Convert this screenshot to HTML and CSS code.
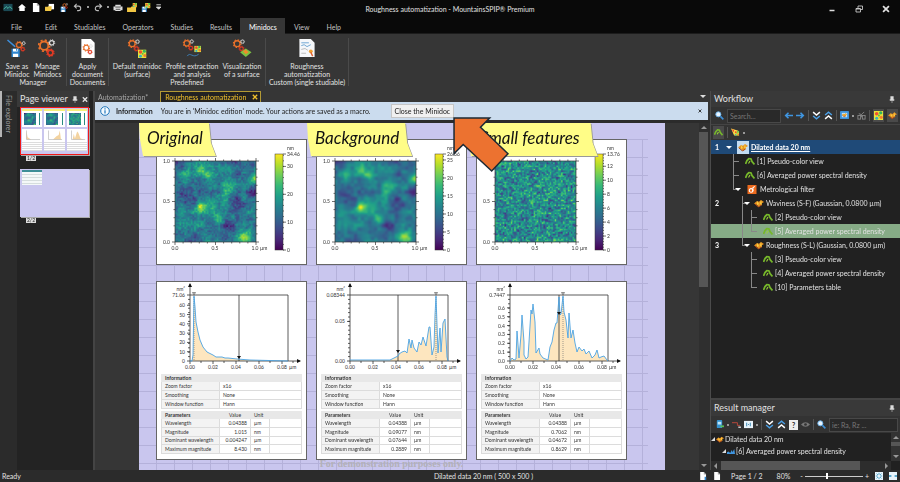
FILE: index.html
```
<!DOCTYPE html>
<html lang="en">
<head>
  <meta charset="UTF-8">
  <meta name="viewport" content="width=device-width, initial-scale=1.0">
  <title>Roughness automatization - MountainsSPIP® Premium</title>
  <link rel="stylesheet" href="styles.css">
</head>
<body>
  <!-- icon sprite -->
  <svg class="sprite" aria-hidden="true">
    <symbol id="i-gears" viewBox="0 0 20 20">
      <circle cx="7" cy="7" r="4.4" fill="none" stroke="#e8702a" stroke-width="2"/>
      <circle cx="7" cy="7" r="5.8" fill="none" stroke="#e8702a" stroke-width="1.8" stroke-dasharray="2.2 2.35"/>
      <circle cx="15" cy="4" r="2.3" fill="none" stroke="#ddd" stroke-width="1.2"/>
      <circle cx="15" cy="4" r="3.2" fill="none" stroke="#ddd" stroke-width="1" stroke-dasharray="1.2 1.3"/>
      <circle cx="13.500" cy="14.500" r="2.700" fill="none" stroke="#e03a24" stroke-width="1.800"/>
      <circle cx="13.500" cy="14.500" r="3.900" fill="none" stroke="#e03a24" stroke-width="1.200" stroke-dasharray="1.600 1.460"/>
    </symbol>
    <symbol id="i-disk" viewBox="0 0 10 10">
      <path d="M0 0h8.500l1.500 1.500V10H0z" fill="#2f86d0"/>
      <path d="M2 0h5.500v3.500H2zM2 6h6v4H2z" fill="#fff"/>
      <path d="M5.500 .7h1.200v2H5.500z" fill="#2f86d0"/>
    </symbol>
    <symbol id="i-map" viewBox="0 0 10 10">
      <rect width="10" height="10" fill="#e8e23a"/>
      <circle cx="3" cy="3" r="2" fill="#f05030"/><circle cx="8" cy="7" r="1.800" fill="#f08030"/>
      <circle cx="7.500" cy="2" r="1.800" fill="#35b55c"/><circle cx="3" cy="8" r="1.700" fill="#38b0c0"/>
      <circle cx="5.500" cy="5" r="1.100" fill="#58c040"/>
    </symbol>
    <symbol id="i-surface" viewBox="0 0 10 8">
      <path d="M0 4l3-2.500 2 .8L7 .5l3 2L7.500 4 8 5.500 4.500 7.500 3 5.500z" fill="#e69422"/>
      <path d="M3 1.500l2 3L3 5.500zM7 .5L6 4l2 1.500z" fill="#f9cf45"/>
      <path d="M1 4.500l3.500 3 3-2" fill="none" stroke="#a8431c" stroke-width="1"/>
    </symbol>
    <symbol id="i-study" viewBox="0 0 10 8">
      <path d="M.5 6.500L2 3l2-2 2 .5 1 2.500 2.500 3" fill="none" stroke="#76b82a" stroke-width="1.800"/>
      <path d="M3.500 6l1.500-2.500" fill="none" stroke="#9bd03a" stroke-width="1.200"/>
    </symbol>
    <symbol id="i-page" viewBox="0 0 8 10"><path d="M.5 0H5l3 3v7H.5z" fill="#fff"/><path d="M5 0v3h3z" fill="#aaa"/></symbol>
    <symbol id="i-pin" viewBox="0 0 6 8"><path d="M1.500 .5h3v3.500h1v1H.5V4h1zM3 5v3" fill="#ddd" stroke="#ddd" stroke-width=".6"/></symbol>
    <symbol id="i-search" viewBox="0 0 10 10"><circle cx="3.700" cy="3.700" r="2.800" fill="#e8f4ff" stroke="#6bb5f0"/><path d="M6 6l3.300 3.300" stroke="#3c8fd8" stroke-width="1.800"/></symbol>
    <symbol id="i-x" viewBox="0 0 6 6"><path d="M.8 .8l4.400 4.400M5.200 .8L.8 5.200" stroke="currentColor" stroke-width="1.300"/></symbol>
    <symbol id="i-chev" viewBox="0 0 8 8"><path d="M1 1l3 2.500L7 1" fill="none" stroke="#fff" stroke-width="1.300"/><path d="M1 4.500L4 7l3-2.500" fill="none" stroke="#4aa0e8" stroke-width="1.300"/></symbol>
    <symbol id="i-arrow" viewBox="0 0 8 8"><path d="M8 4H1.500M4 1.500L1.500 4 4 6.500" fill="none" stroke="#3f95e0" stroke-width="1.400"/></symbol>
    <symbol id="i-folder" viewBox="0 0 11 10"><path d="M0 4h4l1-1h5v6H0z" fill="#f1c644"/></symbol>
  </svg>

  <header class="titlebar">
    <div class="quick">
      <button aria-label="Application"><svg viewBox="0 0 10 10"><rect y="1" width="10" height="8" fill="#1b4a55"/><path d="M0 7l3-3 2 2 2-2 3 3" fill="none" stroke="#4fc3a8"/></svg></button>
      <button aria-label="Home"><svg viewBox="0 0 10 10"><path d="M5 1l4.500 4H8v4H2V5H.5z" fill="#fff"/></svg></button>
      <button aria-label="New"><svg viewBox="0 0 8 10"><use href="#i-page"/></svg></button>
      <button aria-label="Open"><svg viewBox="0 0 11 10"><path d="M4 1h6v6H4z" fill="#fff"/><use href="#i-folder" width="8"/><path d="M0 5h6l1 4H0z" fill="#f1c644"/></svg></button>
      <button aria-label="Save minidoc"><svg viewBox="0 0 10 10"><use href="#i-disk" x="1" y="4" width="6" height="6"/><use href="#i-gears" x="3" width="7" height="7"/></svg></button>
      <button aria-label="Undo"><svg viewBox="0 0 10 10"><path d="M3.500 1L1 3.500 3.500 6M1 3.500h4.500a2.500 2.500 0 010 5H4" fill="none" stroke="#bbb" stroke-width="1.200"/></svg></button>
      <span class="dot"></span>
      <button aria-label="Redo"><svg viewBox="0 0 10 10"><path d="M6.500 1L9 3.500 6.500 6M9 3.500H4.500a2.500 2.500 0 000 5H6" fill="none" stroke="#bbb" stroke-width="1.200"/></svg></button>
      <span class="dot"></span>
      <button aria-label="Print"><svg viewBox="0 0 10 10"><path d="M2 2h6v2h2v4H8v1H2V8H0V4h2z" fill="#ddd"/><path d="M2 4.500h6M2.500 7h5" stroke="#444"/></svg></button>
      <button aria-label="Load surface"><svg viewBox="0 0 11 10"><use href="#i-folder" y="1"/><use href="#i-map" x="6" y="0" width="5" height="5"/></svg></button>
      <button aria-label="Save surface"><svg viewBox="0 0 10 10"><use href="#i-disk" y="4" width="6" height="6"/><use href="#i-map" x="4" width="6" height="6"/></svg></button>
      <button aria-label="Customize"><svg viewBox="0 0 10 10"><path d="M1 2h5M1 4.500h5L3.500 7z" fill="#ddd" stroke="#ddd"/></svg></button>
    </div>
    <div class="app-title">Roughness automatization - MountainsSPIP® Premium</div>
    <div class="win-buttons">
      <button aria-label="Minimize"><svg viewBox="0 0 8 8"><path d="M1.500 5.500h5" stroke="#ddd" stroke-width="1.500"/></svg></button>
      <button aria-label="Restore"><svg viewBox="0 0 8 8"><path d="M3 3V1h4.500v3.500h-2M1 3.500h4.500V7H1zM1 4h4" fill="none" stroke="#ddd" stroke-width=".8"/></svg></button>
      <button aria-label="Close window"><svg viewBox="0 0 6 6"><use href="#i-x"/></svg></button>
    </div>
  </header>

  <nav class="menu">
    <button class="file">File</button>
    <button>Edit</button>
    <button>Studiables</button>
    <button>Operators</button>
    <button>Studies</button>
    <button>Results</button>
    <button class="active">Minidocs</button>
    <button>View</button>
    <button>Help</button>
  </nav>

  <section class="ribbon">
    <div class="group manager">
      <div class="tools">
        <button><svg viewBox="0 0 20 20"><use href="#i-gears" x="8" width="12" height="16"/><path d="M0 1l8 7" stroke="#3d8fdd" stroke-width="1.500"/><use href="#i-disk" x="4" y="10" width="9" height="9"/></svg>Save as<br>Minidoc</button>
        <button><svg viewBox="0 0 20 20"><use href="#i-gears"/></svg>Manage<br>Minidocs</button>
      </div>
      <div class="caption">Manager</div>
    </div>
    <div class="group documents">
      <div class="tools">
        <button><svg viewBox="0 0 20 20"><path d="M3 0h10l4 4v16H3z" fill="#fff"/><use href="#i-gears" x="4" y="5" width="12" height="12"/></svg>Apply<br>document</button>
      </div>
      <div class="caption">Documents</div>
    </div>
    <div class="group predefined">
      <div class="tools">
        <button><svg viewBox="0 0 20 20"><use href="#i-gears" width="14" height="14"/><use href="#i-map" x="11" y="11" width="9" height="9"/></svg>Default minidoc<br>(surface)</button>
        <button><svg viewBox="0 0 20 20"><use href="#i-gears" width="13" height="13"/><use href="#i-map" x="12" y="7" width="8" height="7"/><path d="M5 18c3-5 6 3 12-2" fill="none" stroke="#3d7fb8"/></svg>Profile extraction<br>and analysis</button>
        <button><svg viewBox="0 0 20 20"><use href="#i-gears" width="14" height="14"/><path d="M8 14l6-4 6 4-6 5z" fill="#7cc142"/><path d="M11 13l3-2 3 3-3 2z" fill="#f08a2a"/></svg>Visualization<br>of a surface</button>
      </div>
      <div class="caption">Predefined</div>
    </div>
    <div class="group custom">
      <div class="tools">
        <button><svg viewBox="0 0 20 20"><path d="M2 0h12l4 4v15H2z" fill="#f5f7fa"/><path d="M4 4h8M4 7l3-1 3 2 4-2" fill="none" stroke="#4a90c8" stroke-width=".8"/><path d="M4 11l4-1 3 2M4 15h5" fill="none" stroke="#aaa" stroke-width=".8"/><circle cx="14" cy="13" r="2" fill="#f0a030"/><path d="M14 14l2 4" stroke="#e06030" stroke-width="1.500"/></svg>Roughness<br>automatization</button>
      </div>
      <div class="caption">Custom (single studiable)</div>
    </div>
  </section>

  <main>
    <aside class="explorer"><button>File explorer</button></aside>

    <aside class="viewer">
      <div class="pane-head"><h2>Page viewer</h2><svg class="pin" viewBox="0 0 6 8"><use href="#i-pin"/></svg><button aria-label="Close page viewer"><svg viewBox="0 0 6 6"><use href="#i-x"/></svg></button></div>
      <figure>
        <div class="thumb current">
          <div class="mini"><canvas width="11" height="11" data-map="0"></canvas><i></i></div>
          <div class="mini"><canvas width="11" height="11" data-map="1"></canvas><i></i></div>
          <div class="mini"><canvas width="11" height="11" data-map="2"></canvas><i></i></div>
          <div class="mini report"><svg viewBox="0 0 18 10"><path d="M4 9V2l1 5 3 2z" fill="#f3d3a0"/><path d="M4 1v8h12" fill="none" stroke="#aaa" stroke-width=".5"/></svg></div>
          <div class="mini report"><svg viewBox="0 0 18 10"><path d="M8 9l3-3 2-1 1-4 1 8z" fill="#f3d3a0"/><path d="M4 1v8h12" fill="none" stroke="#aaa" stroke-width=".5"/></svg></div>
          <div class="mini report"><svg viewBox="0 0 18 10"><path d="M5 9l1-5 1 4 2-6 1 1 2 5 3 1z" fill="#f3d3a0"/><path d="M4 1v8h12" fill="none" stroke="#aaa" stroke-width=".5"/></svg></div>
        </div>
        <figcaption>1/2</figcaption>
      </figure>
      <figure>
        <div class="thumb second"><div class="mini-table"></div></div>
        <figcaption>2/2</figcaption>
      </figure>
    </aside>

    <section class="workspace">
      <div class="tabs">
        <button>Automatization*</button>
        <button class="active">Roughness automatization <svg viewBox="0 0 6 6"><use href="#i-x"/></svg></button>
        <span class="drop"></span>
      </div>
      <div class="infobar">
        <svg class="info" viewBox="0 0 10 10"><circle cx="5" cy="5" r="4.300" fill="#f4faff" stroke="#2277bb" stroke-width="1"/><path d="M5 4.300V7.500M5 2.300v1.100" stroke="#2277bb" stroke-width="1.200"/></svg>
        <strong>Information</strong>
        <span>You are in 'Minidoc edition' mode. Your actions are saved as a macro.</span>
        <button class="close-doc">Close the Minidoc</button>
        <button class="dismiss" aria-label="Dismiss"><svg viewBox="0 0 6 6"><use href="#i-x"/></svg></button>
      </div>
      <div class="canvas-area">
        <div class="sheet">
          <div class="cards">
            <article class="card map"><div class="note"><span>Original</span></div></article>
            <article class="card map"><div class="note"><span>Background</span></div></article>
            <article class="card map"><div class="note wide"><span>Small features</span></div></article>
            <article class="card spectrum"></article>
            <article class="card spectrum"></article>
            <article class="card spectrum"></article>
          </div>
          <footer>For demonstration purposes only.</footer>
        </div>
        <div class="vscroll"><i class="up"></i><b></b><i class="down"></i></div>
        <svg class="pointer" viewBox="0 0 57 56"><path d="M2 2h35l-9 9 27 26-16 17L11 28l-9 9z" fill="#ec7230" stroke="#1d2a35" stroke-width="1.500"/></svg>
      </div>
    </section>

    <aside class="side">
      <section class="workflow">
        <div class="pane-head"><h2>Workflow</h2><svg class="pin" viewBox="0 0 6 8"><use href="#i-pin"/></svg></div>
        <div class="toolbar">
          <svg viewBox="0 0 10 10"><use href="#i-search"/></svg>
          <input type="text" placeholder="Search..." aria-label="Search workflow">
          <button aria-label="Previous"><svg viewBox="0 0 8 8"><use href="#i-arrow"/></svg></button>
          <button aria-label="Next"><svg class="flip" viewBox="0 0 8 8"><use href="#i-arrow"/></svg></button>
          <span class="sep"></span>
          <button aria-label="Expand all"><svg viewBox="0 0 8 8"><use href="#i-chev"/></svg></button>
          <button aria-label="Collapse all"><svg class="turn" viewBox="0 0 8 8"><use href="#i-chev"/></svg></button>
          <span class="sep"></span>
          <button aria-label="Display"><svg viewBox="0 0 10 10"><rect width="10" height="9" rx="1" fill="#3d92d8"/><rect x="2" y="2" width="6" height="5" fill="#bfe2fa"/><use href="#i-surface" x="2" y="2" width="6" height="5"/></svg></button>
          <span class="dot"></span>
          <button aria-label="Link"><svg viewBox="0 0 10 10"><g fill="none" stroke="#888"><rect x="1" y="5" width="3" height="4"/><rect x="6" y="5" width="3" height="4"/><path d="M2 3l3 1 3-3M5 4v3"/></g></svg></button>
          <span class="sep"></span>
          <button aria-label="Images" class="on"><svg viewBox="0 0 10 10"><use href="#i-map"/></svg></button>
          <button aria-label="Surfaces" class="on"><svg viewBox="0 0 10 8"><use href="#i-surface"/></svg></button>
        </div>
        <div class="toolbar second-row">
          <button aria-label="Studies" class="on"><svg viewBox="0 0 10 8"><use href="#i-study"/></svg></button>
          <span class="sep"></span>
          <button aria-label="Filter"><svg viewBox="0 0 11 10"><path d="M0 0l9 3-3 2-2 4z" fill="#ffe14a"/><path d="M1 1l3 1-1 3z" fill="#f05030"/><use href="#i-map" x="4" y="3" width="6" height="6"/></svg></button>
          <span class="dot"></span>
        </div>
        <div class="tree">
          <div class="row selected"><span class="num">1</span><i class="caret"></i><span class="tile"><svg viewBox="0 0 10 8"><use href="#i-surface"/></svg></span><a href="#">Dilated data 20 nm</a></div>
          <div class="row"><i class="g tee"></i><svg viewBox="0 0 10 8"><use href="#i-study"/></svg>[1] Pseudo-color view</div>
          <div class="row"><i class="g tee"></i><svg viewBox="0 0 10 8"><use href="#i-study"/></svg>[6] Averaged power spectral density</div>
          <div class="row metro"><i class="g end open"></i><svg viewBox="0 0 10 10"><rect width="10" height="10" fill="#ec6a1e"/><circle cx="4" cy="6" r="2" fill="none" stroke="#fff" stroke-width="1.200"/><path d="M6 7V3l2-1.500" fill="none" stroke="#fff" stroke-width="1.200"/></svg>Metrological filter</div>
          <div class="row"><span class="num">2</span><i class="g"></i><i class="g tee open"></i><svg viewBox="0 0 10 8"><use href="#i-surface"/></svg>Waviness (S-F) (Gaussian, 0.0800 µm)</div>
          <div class="row"><i class="g"></i><i class="g line"></i><i class="g tee"></i><svg viewBox="0 0 10 8"><use href="#i-study"/></svg>[2] Pseudo-color view</div>
          <div class="row hot"><i class="g"></i><i class="g line"></i><i class="g end"></i><svg viewBox="0 0 10 8"><use href="#i-study"/></svg>[5] Averaged power spectral density</div>
          <div class="row"><span class="num">3</span><i class="g"></i><i class="g end open"></i><svg viewBox="0 0 10 8"><use href="#i-surface"/></svg>Roughness (S-L) (Gaussian, 0.0800 µm)</div>
          <div class="row"><i class="g"></i><i class="g"></i><i class="g tee"></i><svg viewBox="0 0 10 8"><use href="#i-study"/></svg>[3] Pseudo-color view</div>
          <div class="row"><i class="g"></i><i class="g"></i><i class="g tee"></i><svg viewBox="0 0 10 8"><use href="#i-study"/></svg>[4] Averaged power spectral density</div>
          <div class="row"><i class="g"></i><i class="g"></i><i class="g end"></i><svg viewBox="0 0 10 8"><use href="#i-study"/></svg>[10] Parameters table</div>
        </div>
      </section>

      <section class="results">
        <div class="pane-head"><h2>Result manager</h2><svg class="pin" viewBox="0 0 6 8"><use href="#i-pin"/></svg></div>
        <div class="toolbar">
          <button aria-label="Export"><svg viewBox="0 0 10 10"><rect x="2" width="6" height="9" rx="1" fill="#3592cf"/><path d="M3 2h4v3H3z" fill="#bfe6fa"/><path d="M6 7h4" stroke="#5bc05b" stroke-width="2"/></svg></button>
          <span class="dot"></span>
          <button aria-label="Tolerance"><svg viewBox="0 0 10 10"><path d="M0 3h6v3h3" fill="none" stroke="#c34a3c"/><path d="M7 8h3" stroke="#ddd" stroke-width="1.500"/></svg></button>
          <button aria-label="Columns"><svg viewBox="0 0 10 10"><rect y="1" width="10" height="8" fill="#e8f4fb"/><path d="M3 3v4M7 3v4M4.500 5h1" stroke="#2b7fae"/></svg></button>
          <span class="dot"></span>
          <span class="sep"></span>
          <button aria-label="Expand results"><svg viewBox="0 0 8 8"><use href="#i-chev"/></svg></button>
          <button aria-label="Collapse results"><svg class="turn" viewBox="0 0 8 8"><use href="#i-chev"/></svg></button>
          <button class="help" aria-label="Help">?</button>
          <button aria-label="Show"><svg viewBox="0 0 10 10"><path d="M0 5q5-5 10 0-5 5-10 0z" fill="#777"/><circle cx="5" cy="5" r="1.500" fill="#333"/></svg></button>
          <span class="sep"></span>
          <svg viewBox="0 0 10 10"><use href="#i-search"/></svg>
          <input type="text" placeholder="ie: Ra, Rz ..." aria-label="Search results">
        </div>
        <div class="result-list">
          <div class="lines">
            <div class="line1"><i class="corner"></i><svg viewBox="0 0 10 8"><use href="#i-surface"/></svg>Dilated data 20 nm</div>
            <div class="line2"><i class="corner"></i><svg viewBox="0 0 10 8"><path d="M0 7V5l2-1 2 2 2-4 1 3 2-4 1 6z" fill="#3f95e0"/></svg>[6] Averaged power spectral density</div>
          </div>
          <div class="rscroll"><i class="up"></i><b></b><i class="down"></i></div>
        </div>
        <div class="hscroll"><i class="left"></i><b></b><i class="right"></i></div>
      </section>
    </aside>
  </main>

  <footer class="status">
    <span class="ready">Ready</span>
    <span class="current-data">Dilated data 20 nm ( 500 x 500 )</span>
    <div class="zoom">
      <svg viewBox="0 0 8 10"><use href="#i-page"/><path d="M7 6v4" stroke="#2f86d0" stroke-width="2"/></svg>
      <svg viewBox="0 0 8 10"><use href="#i-page"/></svg>
      <span class="pages">Page 1 / 2</span>
      <label for="zoom">80%</label>
      <button aria-label="Zoom out">-</button>
      <input type="range" id="zoom" min="0" max="100" value="38">
      <button aria-label="Zoom in">+</button>
      <svg viewBox="0 0 10 10"><rect width="10" height="10" fill="#e8f4fb"/><path d="M5 1v8M1 5h8M2 2l6 6M8 2L2 8" stroke="#2b90c0"/><rect x="3.500" y="3.500" width="3" height="3" fill="#e8f4fb"/></svg>
      <svg viewBox="0 0 10 10"><rect width="10" height="10" fill="#e8f4fb"/><path d="M0 5h3M7 5h3" stroke="#2b90c0" stroke-width="2"/></svg>
    </div>
  </footer>

  <script src="script.js"></script>
</body>
</html>
```
FILE: styles.css
```
* {
  box-sizing: border-box;
}

body {
  margin: 0;
  height: 100vh;
  display: flex;
  flex-direction: column;
  overflow: hidden;
  background: #363636;
  color: #e2e2e2;
  font: 7px/8px Lato, "Open Sans", sans-serif;
}

button {
  font: inherit;
  color: inherit;
  background: none;
  border: 0;
  padding: 0;
  cursor: pointer;
}

svg {
  display: block;
}

.sprite {
  position: absolute;
  width: 0;
  height: 0;
}

h2 {
  margin: 0;
  flex: 1;
  font-size: 9px;
  line-height: 12px;
  font-weight: 400;
  white-space: nowrap;
}

/* title bar */
.titlebar {
  display: grid;
  grid-template-columns: 1fr auto 1fr;
  align-items: center;
  height: 18px;
  background: #090909;
}

.quick {
  display: flex;
  align-items: center;
  gap: 4px;
  padding-left: 3px;
  margin-top: -4px;
}

.quick svg {
  width: 10px;
  height: 9px;
}

.dot {
  width: 2px;
  height: 2px;
  background: #999;
}

.win-buttons {
  display: flex;
  justify-content: flex-end;
  gap: 19px;
  padding-right: 10px;
}

.win-buttons svg {
  width: 8px;
  height: 8px;
}

.menu {
  display: flex;
  height: 16px;
  padding-left: 2px;
  background: #090909;
  border-bottom: 1px solid #1c1c1c;
}

.menu button {
  padding: 2px 8px 0 9px;
  color: #c4c4c4;
}

.menu .file {
  margin-right: 6px;
}

.menu .active {
  background: #363636;
  color: #fff;
  height: 16px;
}

/* ribbon */
.ribbon {
  display: flex;
  height: 57px;
  padding-top: 4px;
}

.group {
  display: flex;
  flex-direction: column;
  align-items: center;
  height: 48px;
  border-right: 1px solid #4a4a4a;
}

.tools {
  display: flex;
  flex: 1;
}

.tools button {
  display: block;
  padding: 0 2px;
  text-align: center;
  line-height: 8px;
  white-space: nowrap;
}

.tools svg {
  width: 20px;
  height: 19px;
  margin: 0 auto 4px;
}

.manager { padding: 0 2px; width: 67px; }
.documents { width: 42px; }
.predefined { width: 157px; }
.custom { width: 83px; }

/* panes */
main {
  flex: 1;
  min-height: 0;
  display: flex;
}

.explorer {
  width: 17px;
  background: #2b2b2b;
}

.explorer button {
  writing-mode: vertical-rl;
  padding: 4px 3px;
  border-left: 2px solid #b5b5b5;
  color: #999;
}

.viewer {
  width: 76px;
  background: #232323;
  padding-right: 4px;
}

.pane-head {
  display: flex;
  align-items: center;
  gap: 4px;
  height: 16px;
  padding: 0 5px 0 3px;
  background: #393939;
}

.pane-head svg {
  flex: none;
  width: 6px;
  height: 7px;
}

.viewer .pane-head {
  padding-right: 2px;
}

figure {
  margin: 0 0 8px 3px;
}

.thumb {
  height: 48px;
  background: #c9c6ee;
  box-shadow: 1px 1px 0 #aaa;
}

.current {
  display: grid;
  grid-template-columns: 1fr 1fr 1fr;
  grid-template-rows: 18px 22px;
  align-content: start;
  gap: 2px;
  padding: 1px;
  border: 1px solid #f01818;
}

.mini {
  display: flex;
  justify-content: space-between;
  background: #fff;
  border-top: 2px solid #f5ee7a;
  padding: 2px;
}

.mini i {
  width: 1px;
  height: 12px;
  background: #2a8a80;
}

.mini.report {
  display: block;
  border: 0;
  padding: 0;
  background: repeating-linear-gradient(#fff 0 1px, #ddd 1px 2px);
}

.report svg {
  width: 100%;
  height: 12px;
  background: #fff;
}

.second {
  padding: 1px 2px;
}

.mini-table {
  width: 20px;
  height: 15px;
  background: repeating-linear-gradient(#f4f8f8 0 2px, #d5dddd 2px 3px);
  border-top: 2px solid #3e8e96;
}

figcaption {
  width: 10px;
  margin: 1px 0 0 6px;
  background: #ddd;
  color: #222;
  font-size: 5px;
  line-height: 5px;
  text-align: center;
}

/* workspace */
.workspace {
  flex: 1;
  min-width: 0;
  display: flex;
  flex-direction: column;
  border-left: 2px solid #444;
}

.tabs {
  display: flex;
  height: 11px;
  padding-left: 3px;
  color: #a5a5a5;
}

.tabs .active {
  display: flex;
  align-items: center;
  gap: 6px;
  margin-left: 12px;
  padding: 0 2px 0 4px;
  background: #222;
  border: 1px solid #b39a35;
  border-bottom: 0;
  color: #f0c02c;
}

.tabs svg {
  width: 6px;
  height: 6px;
}

.drop {
  margin: 4px 4px 0 auto;
  border: 3px solid transparent;
  border-top-color: #ddd;
  height: 0;
}

.infobar {
  display: flex;
  align-items: center;
  height: 18px;
  margin-right: 2px;
  padding: 0 6px 0 5px;
  background: #cbdcee;
  color: #222;
}

.info {
  width: 10px;
  height: 10px;
  margin-right: 6px;
}

.infobar strong {
  margin-right: 8px;
}

.close-doc {
  margin-left: 20px;
  padding: 2px 3px;
  background: #f0f0f0;
  border: 1px solid #c6c6c6;
}

.dismiss {
  margin-left: auto;
}

.dismiss svg {
  width: 4px;
  height: 4px;
}

.canvas-area {
  position: relative;
  flex: 1;
  min-height: 0;
  display: flex;
  border-top: 3px solid #2b2b2b;
}

.sheet {
  flex: 1;
  margin: 0 34px 0 44px;
  padding: 16px 38px 0 17px;
  background:
    linear-gradient(#c9c6ee 0 16px, transparent 0),
    linear-gradient(90deg, transparent calc(100% - 17px), #c9c6ee 0),
    repeating-linear-gradient(90deg, transparent 0 17px, #b4b1da 17px 18px),
    repeating-linear-gradient(transparent 0 16px, #b4b1da 16px 17px, transparent 17px 18px),
    #c9c6ee;
}

.cards {
  display: grid;
  grid-template-columns: 1fr 1fr 1fr;
  gap: 16px 9px;
}

.card {
  position: relative;
  background: #fff;
  color: #333;
  outline: 1px solid #666;
  outline-offset: -1px;
}

.spectrum {
  padding-bottom: 4px;
}

.sheet footer {
  text-align: center;
  font: bold 10px/8px "Liberation Serif", serif;
  color: #b3b1b8;
}

.card text {
  font-size: 5px;
  fill: #333;
}

.note {
  position: absolute;
  top: -16px;
  left: -9px;
  filter: drop-shadow(1px 1px 0 #999);
}

.card:first-child .note {
  left: -17px;
}

.note span {
  display: block;
  padding: 0 13px 0 8px;
  font: italic 17px/30px Lato, sans-serif;
  height: 33px;
  color: #111;
  white-space: nowrap;
  background: #fffd87;
  clip-path: polygon(0 0, calc(100% - 7px) 0, calc(100% - 5px) 60%, 100% 100%, 4px 100%, 1px 50%);
}

.wide span {
  padding: 0 18px 0 13px;
}

table {
  width: calc(100% - 10px);
  margin: 0 5px 2px;
  border-collapse: collapse;
  table-layout: fixed;
  font-size: 5px;
  line-height: 6px;
  border: 1px solid #ccc;
}

.settings { height: 35px; }
.params { height: 43px; }

table th,
table td {
  padding: 0 3px;
  border: 1px solid #dcdcdc;
  text-align: left;
  font-weight: 400;
}

table thead th {
  background: #e8e8e8;
  border-color: #e8e8e8;
}

table thead th:first-child {
  font-weight: 700;
}

tbody th {
  background: #f3f3f3;
}

.params td:nth-child(2) {
  text-align: right;
}

.params thead th:nth-child(2) {
  text-align: center;
}

.c-name { width: 58px; }
.c-value { width: 31px; }
.c-unit { width: 19px; }

/* scroll bars */
.vscroll {
  display: flex;
  flex-direction: column;
  align-items: center;
  width: 11px;
  padding-right: 2px;
  background: #2f2f2f;
}

.vscroll b {
  width: 9px;
  height: 155px;
  background: #565656;
}

.up,
.down,
.left,
.right {
  border: 3px solid transparent;
}

.up { border-bottom-color: #999; margin-bottom: 3px; }
.down { border-top-color: #999; margin-top: auto; }
.left { border-right-color: #999; }
.right { border-left-color: #999; margin-left: auto; }

.pointer {
  position: absolute;
  left: 357px;
  top: -7px;
  width: 58px;
  height: 57px;
}

/* right side */
.side {
  width: 190px;
  display: flex;
  flex-direction: column;
  border-left: 1px solid #4b4b4b;
  background: #212121;
}

.toolbar {
  display: flex;
  align-items: center;
  gap: 3px;
  height: 17px;
  padding: 0 2px 0 4px;
  background: #333;
}

.toolbar svg {
  flex: none;
  width: 9px;
  height: 9px;
}

.toolbar input {
  flex: 1;
  min-width: 0;
  height: 14px;
  padding: 0 2px;
  font: inherit;
  color: #ddd;
  background: #292929;
  border: 1px solid #484848;
}

.toolbar input::placeholder {
  color: #777;
}

.second-row {
  height: 16px;
  padding: 0 2px;
  border-top: 1px solid #444;
}

.toolbar .on {
  padding: 2px 1px;
  background: #4a4a4a;
}

.flip {
  transform: scaleX(-1);
}

.turn {
  transform: rotate(180deg);
}

.sep {
  width: 1px;
  height: 11px;
  background: #555;
}

.workflow {
  flex: 1;
  min-height: 0;
}

.row {
  position: relative;
  display: flex;
  align-items: center;
  height: 14px;
  padding-left: 22px;
  white-space: nowrap;
}

.row svg {
  width: 10px;
  height: 9px;
  margin: 0 2px 0 3px;
}

.metro svg {
  margin: 0 3px 0 5px;
}

.num {
  position: absolute;
  left: 4px;
  font-weight: 700;
  color: #fff;
}

.selected {
  padding-left: 15px;
  background: #1f4a78;
}

.selected a {
  color: #fff;
  font-weight: 700;
}

.caret,
.open::after {
  border: 3px solid transparent;
  border-top-color: #fff;
  border-bottom: 0;
}

.tile {
  width: 12px;
  height: 13px;
  margin: 0 2px 0 5px;
  padding-top: 2px;
  background: #c3dcf2;
}

.tile svg {
  margin: 0 1px;
}

.hot {
  background: #86ab86;
}

.g {
  position: relative;
  width: 9px;
  height: 14px;
}

/* guide lines run through the full row so they join up */
.line::before,
.tee::before {
  content: "";
  position: absolute;
  left: 0;
  top: 0;
  height: 14px;
  border-left: 1px solid #888;
}

.tee {
  background: linear-gradient(#888, #888) 0 7px / 6px 1px no-repeat;
}

.end {
  background:
    linear-gradient(#888, #888) 0 7px / 6px 1px no-repeat,
    linear-gradient(#888, #888) 0 0 / 1px 7px no-repeat;
}

.open::after {
  content: "";
  position: absolute;
  left: 2px;
  top: 6px;
}

.results {
  border-top: 2px solid #444;
}

.help {
  width: 9px;
  height: 10px;
  background: #eee;
  color: #222;
  font-weight: 700;
}

.result-list {
  display: flex;
  height: 28px;
}

.lines {
  flex: 1;
  line-height: 12px;
  white-space: nowrap;
  overflow: hidden;
}

.lines div {
  display: flex;
  align-items: center;
}

.lines svg {
  width: 8px;
  height: 7px;
  margin: 0 1px;
}

.line2 {
  padding-left: 11px;
}

.corner {
  border: 2px solid transparent;
  border-right-color: #ddd;
  border-bottom-color: #ddd;
}

.rscroll {
  display: flex;
  flex-direction: column;
  align-items: center;
  width: 9px;
  background: #333;
}

.rscroll b {
  width: 9px;
  height: 4px;
  background: #565656;
}

.hscroll {
  display: flex;
  align-items: center;
  height: 9px;
  margin-right: 9px;
  background: #2d2d2d;
}

.hscroll b {
  width: 139px;
  height: 9px;
  margin-left: 4px;
  background: #565656;
}

/* status bar */
.status {
  display: grid;
  grid-template-columns: 1fr auto 1fr;
  align-items: center;
  height: 12px;
  padding: 0 3px 0 2px;
  background: #2b2b2b;
}

.current-data {
  padding-left: 68px;
}

.zoom {
  display: flex;
  justify-content: flex-end;
  align-items: center;
  gap: 6px;
}

.zoom svg {
  width: 8px;
  height: 8px;
}

.pages {
  margin: 0 8px 0 4px;
}

.zoom label {
  margin-right: 4px;
}

.zoom input {
  appearance: none;
  width: 58px;
  height: 8px;
  margin: 0 -4px;
  background: linear-gradient(#ccc, #ccc) 0 4px / 100% 1px no-repeat;
}

.zoom input::-webkit-slider-thumb {
  appearance: none;
  width: 2px;
  height: 6px;
  background: #fff;
}
```
FILE: script.js
```
const viridis = [
  [68, 1, 84], [72, 40, 120], [62, 74, 137], [49, 104, 142], [38, 130, 142],
  [31, 158, 137], [53, 183, 121], [109, 205, 89], [180, 222, 44], [253, 231, 37]
];

// x, y, radius, height of the main bumps and pits of the surface
const bumps = [
  [0.31, 0.57, 0.035, 0.5], [0.53, 0.72, 0.045, 0.3], [0.84, 0.92, 0.05, 0.42],
  [0.88, 0.99, 0.05, 0.3], [0.33, 0.11, 0.06, 0.25], [0.1, 0.15, 0.05, 0.25],
  [0.42, 0.18, 0.04, 0.2], [0.66, 0.32, 0.08, 0.2], [0.99, 0.21, 0.04, 0.35],
  [0.45, 0.58, 0.09, 0.15], [0.08, 0.72, 0.1, 0.12], [0.75, 0.52, 0.06, -0.22],
  [0.65, 0.82, 0.05, -0.25], [0.12, 0.46, 0.08, -0.15], [0.99, 0.38, 0.05, -0.3],
  [0.2, 0.93, 0.06, -0.12], [0.05, 0.03, 0.08, -0.15], [0.8, 0.08, 0.1, -0.08]
];

function hash(x, y) {
  const n = Math.sin(x * 127.1 + y * 311.7) * 43758.5453;
  return n - Math.floor(n);
}

function noise(x, y) {
  const ix = Math.floor(x), iy = Math.floor(y);
  let fx = x - ix, fy = y - iy;
  fx = fx * fx * (3 - 2 * fx);
  fy = fy * fy * (3 - 2 * fy);
  const a = hash(ix, iy) * (1 - fx) + hash(ix + 1, iy) * fx;
  const b = hash(ix, iy + 1) * (1 - fx) + hash(ix + 1, iy + 1) * fx;
  return a * (1 - fy) + b * fy - 0.5;
}

function height(kind, u, v) {
  if (kind === 2) {
    return 0.49 + noise(u * 50, v * 50) * 0.45 + noise(u * 33 + 7, v * 33) * 0.3;
  }
  let h = 0.4 + noise(u * 13, v * 13) * 0.22 + noise(u * 24 + 5, v * 24) * 0.14;
  for (const [bx, by, r, a] of bumps) {
    h += a * Math.exp(-((u - bx) ** 2 + (v - by) ** 2) / (2 * r * r));
  }
  if (kind === 0) {
    h += noise(u * 50, v * 50) * 0.2;
  }
  return h;
}

function paint(canvas) {
  const ctx = canvas.getContext("2d");
  const size = canvas.width;
  const img = ctx.createImageData(size, size);
  for (let y = 0; y < size; y++) {
    for (let x = 0; x < size; x++) {
      const h = height(+canvas.dataset.map, x / size, y / size);
      const t = Math.max(0, Math.min(0.999, h)) * 9;
      const i = Math.floor(t), f = t - i, o = (y * size + x) * 4;
      for (let c = 0; c < 3; c++) {
        img.data[o + c] = viridis[i][c] * (1 - f) + viridis[i + 1][c] * f;
      }
      img.data[o + 3] = 255;
    }
  }
  ctx.putImageData(img, 0, 0);
}

const label = (x, y, text, anchor) => `<text x="${x}" y="${y}" text-anchor="${anchor}">${text}</text>`;

const scales = [
  { max: 34.46, top: "34.46", step: 10 },
  { max: 26.66, top: "26.66", step: 5 },
  { max: 13.76, top: "13.76", step: 2 }
];

document.querySelectorAll(".card.map").forEach((card, n) => {
  const s = scales[n];
  let ticks = "";
  for (let i = 0; i <= 10; i++) {
    const len = i % 5 ? 1.5 : 3;
    const p = 19 + i * 8.1, q = 22 + i * 8.1;
    ticks += `M${p} 103v${len}M${p} 22v-${len}M19 ${q}h-${len}M100 ${q}h${len}`;
  }
  let text = label(19, 111, "0.0", "middle") + label(59, 111, "0.5", "middle") +
    label(99, 111, "1.0", "middle") + label(104, 111, "µm", "start") +
    label(14, 24, "1.0", "end") + label(14, 64, "0.5", "end") + label(14, 105, "0.0", "end") +
    label(131, 11, "nm", "start") + label(131, 17, s.top, "start");
  for (let v = 0; v < s.max; v += s.step) {
    const y = 111 - v / s.max * 96;
    text += label(131, y + 2, v, "start");
    ticks += `M127 ${y}h3`;
  }
  for (let v = 0; v < s.max; v += s.step / 5) {
    ticks += `M127 ${111 - v / s.max * 96}h1`;
  }
  const stops = viridis.map((c, i) => `<stop offset="${i / 9}" stop-color="rgb(${c})"/>`).join("");
  card.insertAdjacentHTML("afterbegin", `
    <svg viewBox="0 0 151 126">
      <defs><linearGradient id="bar${n}" x1="0" x2="0" y1="1" y2="0">${stops}</linearGradient></defs>
      <foreignObject x="19" y="22" width="81" height="81"><canvas width="81" height="81" data-map="${n}"></canvas></foreignObject>
      <rect x="119" y="15" width="8" height="96" fill="url(#bar${n})" stroke="#333" stroke-width=".5"/>
      <path d="M19 22h81v81H19z${ticks}M127 15h3" fill="none" stroke="#333" stroke-width=".7"/>
      ${text}
    </svg>`);
});

document.querySelectorAll("canvas").forEach(paint);

const spectra = [
  {
    top: "71.06", max: 71.06, step: 10, digits: 0, peak: 38, cursor: 83, mark: 78,
    line: "34,80 36,80 37,74 38,15 39,26 40,41 42,51 44,59 47,66 51,71 57,74 60,76 66,76 69,77 72,77 81,78 94,79 132,80",
    values: ["0.04388", "1.015", "0.004247", "8.430"]
  },
  {
    top: "0.08344", max: 0.08344, step: 0.05, digits: 2, peak: 120, cursor: 82, mark: 72,
    line: "34,79 74,79 78,77 82,75 83,73 86,71 89,70 91,72 93,58 95,67 96,59 98,67 101,71 103,61 105,64 107,56 110,65 113,46 114,46 116,74 118,66 119,34 120,15 122,72 124,47 125,71 127,42 129,38 131,76 132,80",
    values: ["0.04388", "0.09077", "0.07644", "0.2889"]
  },
  {
    top: "0.7447", max: 0.7447, step: 0.1, digits: 1, peak: 87, cursor: 83, mark: 34,
    line: "34,80 36,77 38,79 40,78 41,50 43,77 45,54 46,34 48,61 48,74 50,78 52,76 53,61 55,29 56,33 57,23 59,41 60,72 63,67 64,73 67,77 72,79 74,66 76,61 78,49 80,42 81,42 83,16 84,34 85,33 87,15 88,31 90,39 92,57 93,32 95,57 97,49 99,62 101,71 103,66 106,70 108,68 110,73 113,70 116,77 119,74 121,69 123,77 125,76 128,75 131,79 132,80",
    values: ["0.04388", "0.7062", "0.04672", "0.8629"]
  }
];

const names = ["Wavelength", "Magnitude", "Dominant wavelength", "Maximum magnitude"];

document.querySelectorAll(".card.spectrum").forEach((card, n) => {
  const s = spectra[n];
  let ticks = "M31 14h3", text = label(29, 16, s.top, "end") + label(29, 10, "nm²", "end");
  for (let i = 0; i < 5; i++) {
    text += label(34 + i * 23, 88, (i * 0.02).toFixed(2), "middle");
    ticks += `M${34 + i * 23} 80v3M${45 + i * 23} 80v2`;
  }
  text += label(133, 88, "µm", "start");
  // the top value takes the place of the last round one
  for (let i = 0; i * s.step < s.max * 0.9; i++) {
    const y = 80 - i * s.step / s.max * 66;
    text += label(29, y + 2, (i * s.step).toFixed(s.digits), "end");
    ticks += `M31 ${y}h3`;
  }
  for (let i = 1; i < 15; i++) {
    ticks += `M32 ${80 - i * 4.4}h2`;
  }
  const rows = names.map((name, i) =>
    `<tr><th scope="row">${name}</th><td>${s.values[i]}</td><td>${i % 2 ? "nm" : "µm"}</td><td></td></tr>`).join("");
  card.innerHTML = `
    <svg viewBox="0 0 151 93">
      <polygon points="${s.line} 132,80 34,80" fill="#fde6bf"/>
      <path d="M34 14h98v66M34 3v77h110${ticks}M${s.cursor} 14v66" fill="none" stroke="#333" stroke-width=".8"/>
      <path d="M${s.peak} 14v66" stroke="#777" stroke-width=".7" stroke-dasharray="1 1"/>
      <polyline points="${s.line}" fill="none" stroke="#4ba3e3" stroke-width=".9"/>
      <path d="M34 2l-2 4h4zM145 80l-4-2v4zM${s.cursor} ${s.mark}l-2-3h4z" fill="#111"/>
      <path d="M${s.peak} 14l-1.500-2.500h3z" fill="#ccc" stroke="#555" stroke-width=".6"/>
      ${text}
    </svg>
    <table class="settings">
      <colgroup><col class="c-name"><col></colgroup>
      <thead><tr><th colspan="2">Information</th></tr></thead>
      <tbody>
        <tr><th scope="row">Zoom factor</th><td>x16</td></tr>
        <tr><th scope="row">Smoothing</th><td>None</td></tr>
        <tr><th scope="row">Window function</th><td>Hann</td></tr>
      </tbody>
    </table>
    <table class="params">
      <colgroup><col class="c-name"><col class="c-value"><col class="c-unit"><col></colgroup>
      <thead><tr><th>Parameters</th><th>Value</th><th>Unit</th><th></th></tr></thead>
      <tbody>${rows}</tbody>
    </table>`;
});
```
